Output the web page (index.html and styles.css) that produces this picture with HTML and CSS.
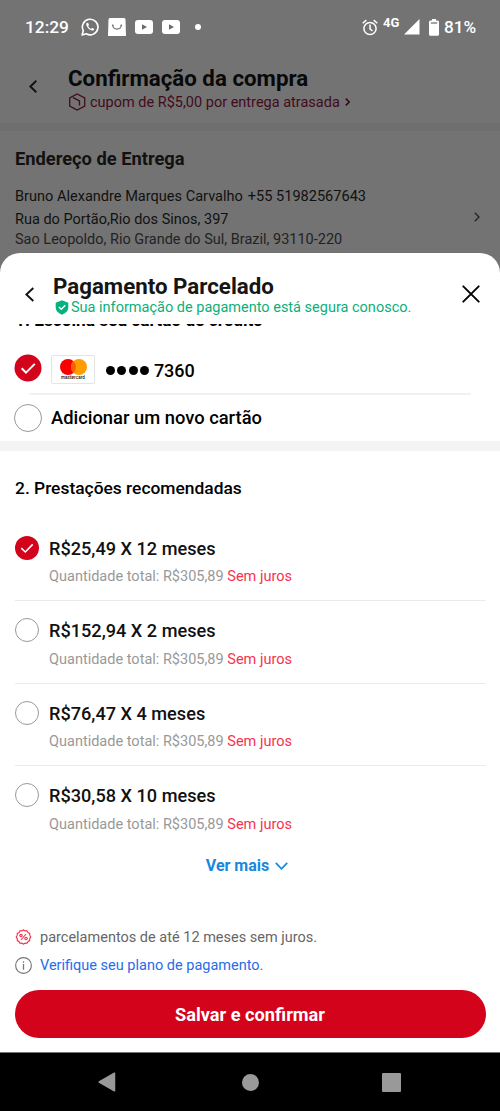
FILE: index.html
```html
<!DOCTYPE html>
<html lang="pt-BR">
<head>
<meta charset="utf-8">
<title>Pagamento Parcelado</title>
<link rel="stylesheet" href="styles.css">
</head>
<body>
<div class="app">
  <div class="status">
    <span class="clock">12:29</span>
    <svg class="s-wa" width="18" height="18" viewBox="0 0 18 18"><path d="M1.100 17l1.200-4.300A7.800 7.800 0 1 1 5.300 15.800z" fill="none" stroke="#fff" stroke-width="1.600" stroke-linejoin="round"/><path d="M6.200 4.700c-.8.3-1.200 1.300-.9 2.400.7 2.500 2.900 4.900 5.700 5.500 1.100.1 2.100-.6 2.200-1.700l-2-1.100-1 1.100c-1.300-.5-2.400-1.600-3-2.900l.8-1-.8-2.100z" fill="#fff"/></svg>
    <svg class="s-bag" width="18" height="18" viewBox="0 0 18 18"><path d="M2 0h14q1.500 0 1.500 1.500L18 18H0L.5 1.500Q.5 0 2 0z" fill="#fff"/><path d="M4.700 7.300c.6 5 8 5 8.600 0" fill="none" stroke="#737373" stroke-width="1.200" stroke-linecap="round"/><circle cx="4.700" cy="7.300" r=".9" fill="#737373"/><circle cx="13.300" cy="7.300" r=".9" fill="#737373"/></svg>
    <svg class="s-yt" width="18" height="14" viewBox="0 0 18 14"><rect width="18" height="14" rx="3" fill="#fff"/><path d="M7 4.200v5.600L12 7z" fill="#6b6b6b"/></svg>
    <svg class="s-yt" width="18" height="14" viewBox="0 0 18 14"><rect width="18" height="14" rx="3" fill="#fff"/><path d="M7 4.200v5.600L12 7z" fill="#6b6b6b"/></svg>
    <span class="dot"></span>
    <svg class="s-alarm" width="16" height="17" viewBox="0 0 16 17"><g fill="none" stroke="#fff" stroke-width="1.500"><circle cx="8" cy="9.500" r="6.100"/><path d="M8 5.500v4.300l2.500 2.200M.7 4.200L4.300 1.100M15.300 4.200L11.700 1.100"/></g></svg>
    <span class="net">4G</span>
    <svg class="s-sig" width="16" height="16" viewBox="0 0 16 16"><path d="M15.500 0v15.500H0z" fill="#fff"/></svg>
    <svg class="s-bat" width="10" height="17" viewBox="0 0 10 17"><path d="M3 0h4v1.500h1.500q1.500 0 1.500 1.500v12.200q0 1.500-1.500 1.500h-7Q0 16.700 0 15.200V3q0-1.500 1.500-1.500H3z" fill="#fff"/><path d="M1.800 4h6.400" stroke="#737373" stroke-width="1.300"/></svg>
    <span class="pct">81%</span>
  </div>
  <div class="page-head">
    <svg class="back" width="8" height="13" viewBox="0 0 8 13"><path d="M7.300.8L1.300 6.500 7.300 12.200" fill="none" stroke="#111" stroke-width="1.900"/></svg>
    <div>
      <h1 class="title">Confirmação da compra</h1>
      <div class="coupon">
        <svg width="18" height="18" viewBox="0 0 18 18"><path d="M9.200 1l7.500 4v8L9.200 17 1.700 13V5zM5 4.600l6.500 3.200v4.700" fill="none" stroke="#420b1c" stroke-width="1.300"/></svg>
        <span>cupom de R$5,00 por entrega atrasada</span>
        <svg class="mini" width="5" height="8" viewBox="0 0 5 8"><path d="M.8.6L4.200 4 .8 7.400" fill="none" stroke="#350817" stroke-width="1.500"/></svg>
      </div>
    </div>
  </div>
  <div class="address">
    <div class="addr-text">
      <h2 class="addr-title">Endereço de Entrega</h2>
      <p class="person"><span class="name">Bruno Alexandre Marques Carvalho</span><span class="phone">+55 51982567643</span></p>
      <p class="street">Rua do Portão,Rio dos Sinos, 397</p>
      <p class="city">Sao Leopoldo, Rio Grande do Sul, Brazil, 93110-220</p>
    </div>
    <svg class="next" width="6" height="10" viewBox="0 0 6 10"><path d="M.8.8L5 5 .8 9.200" fill="none" stroke="#222" stroke-width="1.300"/></svg>
  </div>
  <div class="sheet">
    <div class="sheet-head">
      <svg class="sheet-back" width="10" height="15" viewBox="0 0 10 15"><path d="M8.300 1L1.400 7.500l6.900 6.500" fill="none" stroke="#111" stroke-width="1.900"/></svg>
      <div class="sheet-titles">
        <h2 class="sheet-title">Pagamento Parcelado</h2>
        <div class="safe">
          <svg width="14" height="15" viewBox="0 0 14 15"><path d="M7 .2l6.300 2.500v5.100c0 3-2.300 5.200-6.300 6.900C3 13 .7 10.800.7 7.800V2.700z" fill="#06b17d"/><path d="M3.900 7l2.400 2.300 4-4" fill="none" stroke="#fff" stroke-width="1.400"/></svg>
          <span>Sua informação de pagamento está segura conosco.</span>
        </div>
      </div>
      <svg class="close" width="18" height="18" viewBox="0 0 18 18"><path d="M1.300 1.300l15.400 15.400M16.700 1.300L1.300 16.700" stroke="#000" stroke-width="1.900" stroke-linecap="round"/></svg>
    </div>
    <div class="clip"><h3 class="step1">1. Escolha seu cartão de crédito</h3></div>
    <div class="card-row">
      <svg width="28" height="28" viewBox="0 0 28 28"><circle cx="14" cy="14" r="13.500" fill="#d3031c"/><path d="M7.700 14.200l4.300 4.400 8.800-8.700" fill="none" stroke="#fff" stroke-width="2"/></svg>
      <div class="brand">
        <svg width="27" height="16" viewBox="0 0 27 16"><circle cx="8" cy="8" r="8" fill="#f90000"/><circle cx="19" cy="8" r="8" fill="#ff9c00"/><path d="M13.500 2.200a8 8 0 0 1 0 11.600 8 8 0 0 1 0-11.600z" fill="#ff5f00"/></svg>
        <span>mastercard</span>
      </div>
      <span class="bullets"><i></i><i></i><i></i><i></i></span>
      <span class="digits">7360</span>
    </div>
    <div class="add-row"><span class="radio big"></span><span class="add">Adicionar um novo cartão</span></div>
    <div class="band"></div>
    <h3 class="step2">2. Prestações recomendadas</h3>
    <div class="plan first">
      <svg class="mark" width="24" height="24" viewBox="0 0 24 24"><circle cx="12" cy="12" r="12" fill="#d3031c"/><path d="M6.300 12.200l4 3.800 7.400-7.600" fill="none" stroke="#fff" stroke-width="1.600"/></svg>
      <div><p class="price">R$25,49 X 12 meses</p><p class="total"><span>Quantidade total: R$305,89</span> <em>Sem juros</em></p></div>
    </div>
    <div class="plan">
      <span class="radio mark"></span>
      <div><p class="price">R$152,94 X 2 meses</p><p class="total"><span>Quantidade total: R$305,89</span> <em>Sem juros</em></p></div>
    </div>
    <div class="plan">
      <span class="radio mark"></span>
      <div><p class="price">R$76,47 X 4 meses</p><p class="total"><span>Quantidade total: R$305,89</span> <em>Sem juros</em></p></div>
    </div>
    <div class="plan">
      <span class="radio mark"></span>
      <div><p class="price">R$30,58 X 10 meses</p><p class="total"><span>Quantidade total: R$305,89</span> <em>Sem juros</em></p></div>
    </div>
    <div class="more"><span>Ver mais</span><svg width="13" height="8" viewBox="0 0 13 8"><path d="M.8.800L6.500 6.800 12.200.8" fill="none" stroke="#1688dd" stroke-width="1.700"/></svg></div>
    <div class="note">
      <svg width="17" height="16" viewBox="0 0 16 16"><g fill="none" stroke="#f22d4b" stroke-width="1.100"><path d="M8 .8Q9.500 2.300 11.600 1.800Q12.200 3.800 14.200 4.400Q13.700 6.500 15.200 8Q13.700 9.500 14.200 11.600Q12.200 12.200 11.600 14.200Q9.500 13.700 8 15.200Q6.500 13.700 4.400 14.200Q3.800 12.200 1.800 11.600Q2.300 9.500.8 8Q2.300 6.500 1.800 4.400Q3.800 3.800 4.400 1.800Q6.500 2.300 8 .8z"/><circle cx="5.500" cy="6.600" r="1.200"/><circle cx="10.500" cy="9.500" r="1.200"/><path d="M10.500 5l-5 6"/></g></svg>
      <span class="note-text">parcelamentos de até 12 meses sem juros.</span>
    </div>
    <div class="note">
      <svg width="17" height="17" viewBox="0 0 16 16"><circle cx="8" cy="8" r="7.400" fill="none" stroke="#777" stroke-width="1.100"/><path d="M8 6.700v5.300M8 4v1.500" stroke="#777" stroke-width="1.200"/></svg>
      <a class="link">Verifique seu plano de pagamento.</a>
    </div>
    <div class="cta">Salvar e confirmar</div>
  </div>
  <div class="nav">
    <svg width="18" height="20" viewBox="0 0 18 20"><path d="M16.500 1.200v17.600L1.200 10z" fill="#999" stroke="#999" stroke-width="1.500" stroke-linejoin="round"/></svg>
    <span class="home"></span>
    <span class="recent"></span>
  </div>
</div>
</body>
</html>
```
FILE: styles.css
```css
* { box-sizing: border-box; margin: 0; }
body { font-family: Roboto, "Liberation Sans", sans-serif; background: #000; color: #111; }
svg { display: block; flex: none; }
h1, h2, h3, p, span, a { white-space: nowrap; }
.app { width: 500px; height: 1111px; background: #737373; display: flex; flex-direction: column; overflow: hidden; }

.status { height: 54px; flex: none; display: flex; align-items: center; padding-left: 25px; color: #fff; }
.clock { width: 56px; font-size: 17.300px; font-weight: 500; line-height: 54px; }
.s-bag { margin-left: 9px; }
.s-yt { margin-left: 9px; }
.dot { width: 6px; height: 6px; border-radius: 50%; background: #fff; margin-left: 15px; }
.s-alarm { margin-left: 161px; }
.net { width: 16px; margin: 0 5px 8px; font-size: 13px; font-weight: 700; line-height: 14px; }
.s-bat { margin-left: 9px; }
.pct { margin-left: 5px; font-size: 17.200px; font-weight: 500; }

.page-head { height: 69px; flex: none; display: flex; padding-left: 29px; color: #090909; }
.back { margin: 26px 31px 0 0; }
.title { font-size: 22.300px; line-height: 24px; margin-top: 12px; font-weight: 700; }
.coupon { display: flex; align-items: center; height: 24px; font-size: 14.500px; color: #420b1c; }
.coupon span { margin: 0 5px 0 4px; }

.address { height: 130px; flex: none; border-top: 8px solid #6e6e6e; padding: 17px 20px 0 15px; display: flex; justify-content: space-between; }
.addr-title { font-size: 18.300px; line-height: 22px; font-weight: 700; }
.person { margin-top: 16px; display: flex; gap: 5px; font-size: 14.550px; line-height: 22px; }
.street { font-size: 14.500px; line-height: 23px; }
.city { font-size: 14.500px; line-height: 18px; color: #222; }
.next { margin-top: 64px; }

.sheet { height: 799px; flex: none; background: #fff; border-radius: 20px 20px 0 0; display: flex; flex-direction: column; }
.sheet-head { height: 71px; flex: none; display: flex; padding: 22px 20px 0 25px; }
.sheet-back { margin-top: 12px; }
.sheet-titles { flex: 1; padding-left: 18px; }
.sheet-title { font-size: 22.300px; line-height: 22px; font-weight: 700; color: #151515; }
.safe { display: flex; align-items: center; height: 21px; gap: 2px; font-size: 14.500px; color: #0caf7a; padding-left: 2px; }
.close { margin-top: 10px; }
.clip { height: 5px; flex: none; overflow: hidden; padding-left: 15px; display: flex; align-items: flex-end; }
.step1 { font-size: 17.250px; line-height: 20px; font-weight: 700; color: #000; margin-bottom: -1px; }
.card-row { height: 66px; flex: none; margin: 0 29px; border-bottom: 2px solid #f1f1f1; display: flex; align-items: center; padding-top: 17px; }
.card-row > svg { margin: -3px 0 0 -15px; }
.brand { width: 44px; height: 29px; margin: -1px 0 0 9px; border: 1px solid #e4e4e4; border-radius: 2px; display: flex; flex-direction: column; align-items: center; padding-top: 3px; }
.brand span { font-size: 4.500px; line-height: 5px; font-weight: 500; letter-spacing: .1px; }
.bullets { display: flex; gap: 2.300px; margin: 2px 5px 0 11px; }
.bullets i { width: 9px; height: 9px; border-radius: 50%; background: #000; }
.digits { font-size: 18px; line-height: 22px; font-weight: 500; color: #000; margin-top: 2px; }
.add-row { height: 46px; flex: none; display: flex; align-items: center; padding-left: 14px; }
.radio { border: 1.500px solid #999; border-radius: 50%; flex: none; }
.radio.big { width: 28px; height: 28px; }
.add { margin: -2px 0 0 9px; font-size: 18.350px; font-weight: 500; color: #000; }
.band { height: 10px; flex: none; background: #f4f4f4; }
.step2 { margin-left: 15px; padding-top: 27px; height: 84.500px; flex: none; font-size: 17.400px; line-height: 20px; font-weight: 500; color: #000; }

.plan { height: 82.670px; flex: none; margin: 0 14px 0 15px; padding-top: 17px; border-top: 1.500px solid #ebebeb; display: flex; gap: 10px; }
.plan.first { height: 64.500px; padding-top: 0; border-top: 0; }
.mark { width: 24px; height: 24px; }
.price { font-size: 18.150px; line-height: 24px; font-weight: 500; margin-top: 1px; }
.total { font-size: 14.530px; line-height: 20px; color: #999; margin-top: 6.500px; }
.total em { color: #f53350; font-style: normal; }
.more { height: 36px; flex: none; display: flex; justify-content: center; align-items: center; gap: 6px; font-size: 16px; font-weight: 700; color: #1688dd; padding-right: 6px; }
.note { display: flex; align-items: center; height: 28px; flex: none; padding-left: 15px; gap: 8px; font-size: 14.500px; color: #666; }
.link { color: #296bea; }
.more + .note { margin-top: 39.500px; }
.cta { height: 48.500px; flex: none; margin: 10.500px 14.500px 0; border-radius: 25px; background: #d3031c; color: #fff; font-size: 18.200px; font-weight: 700; display: flex; align-items: center; justify-content: center; }
.nav { flex: 1; background: #000; border-top: 1px solid #777; display: flex; align-items: center; padding-left: 98px; }
.home { width: 17px; height: 17px; border-radius: 50%; background: #999; margin-left: 126px; }
.recent { width: 19px; height: 19px; border-radius: 1px; background: #999; margin-left: 123px; }
```
